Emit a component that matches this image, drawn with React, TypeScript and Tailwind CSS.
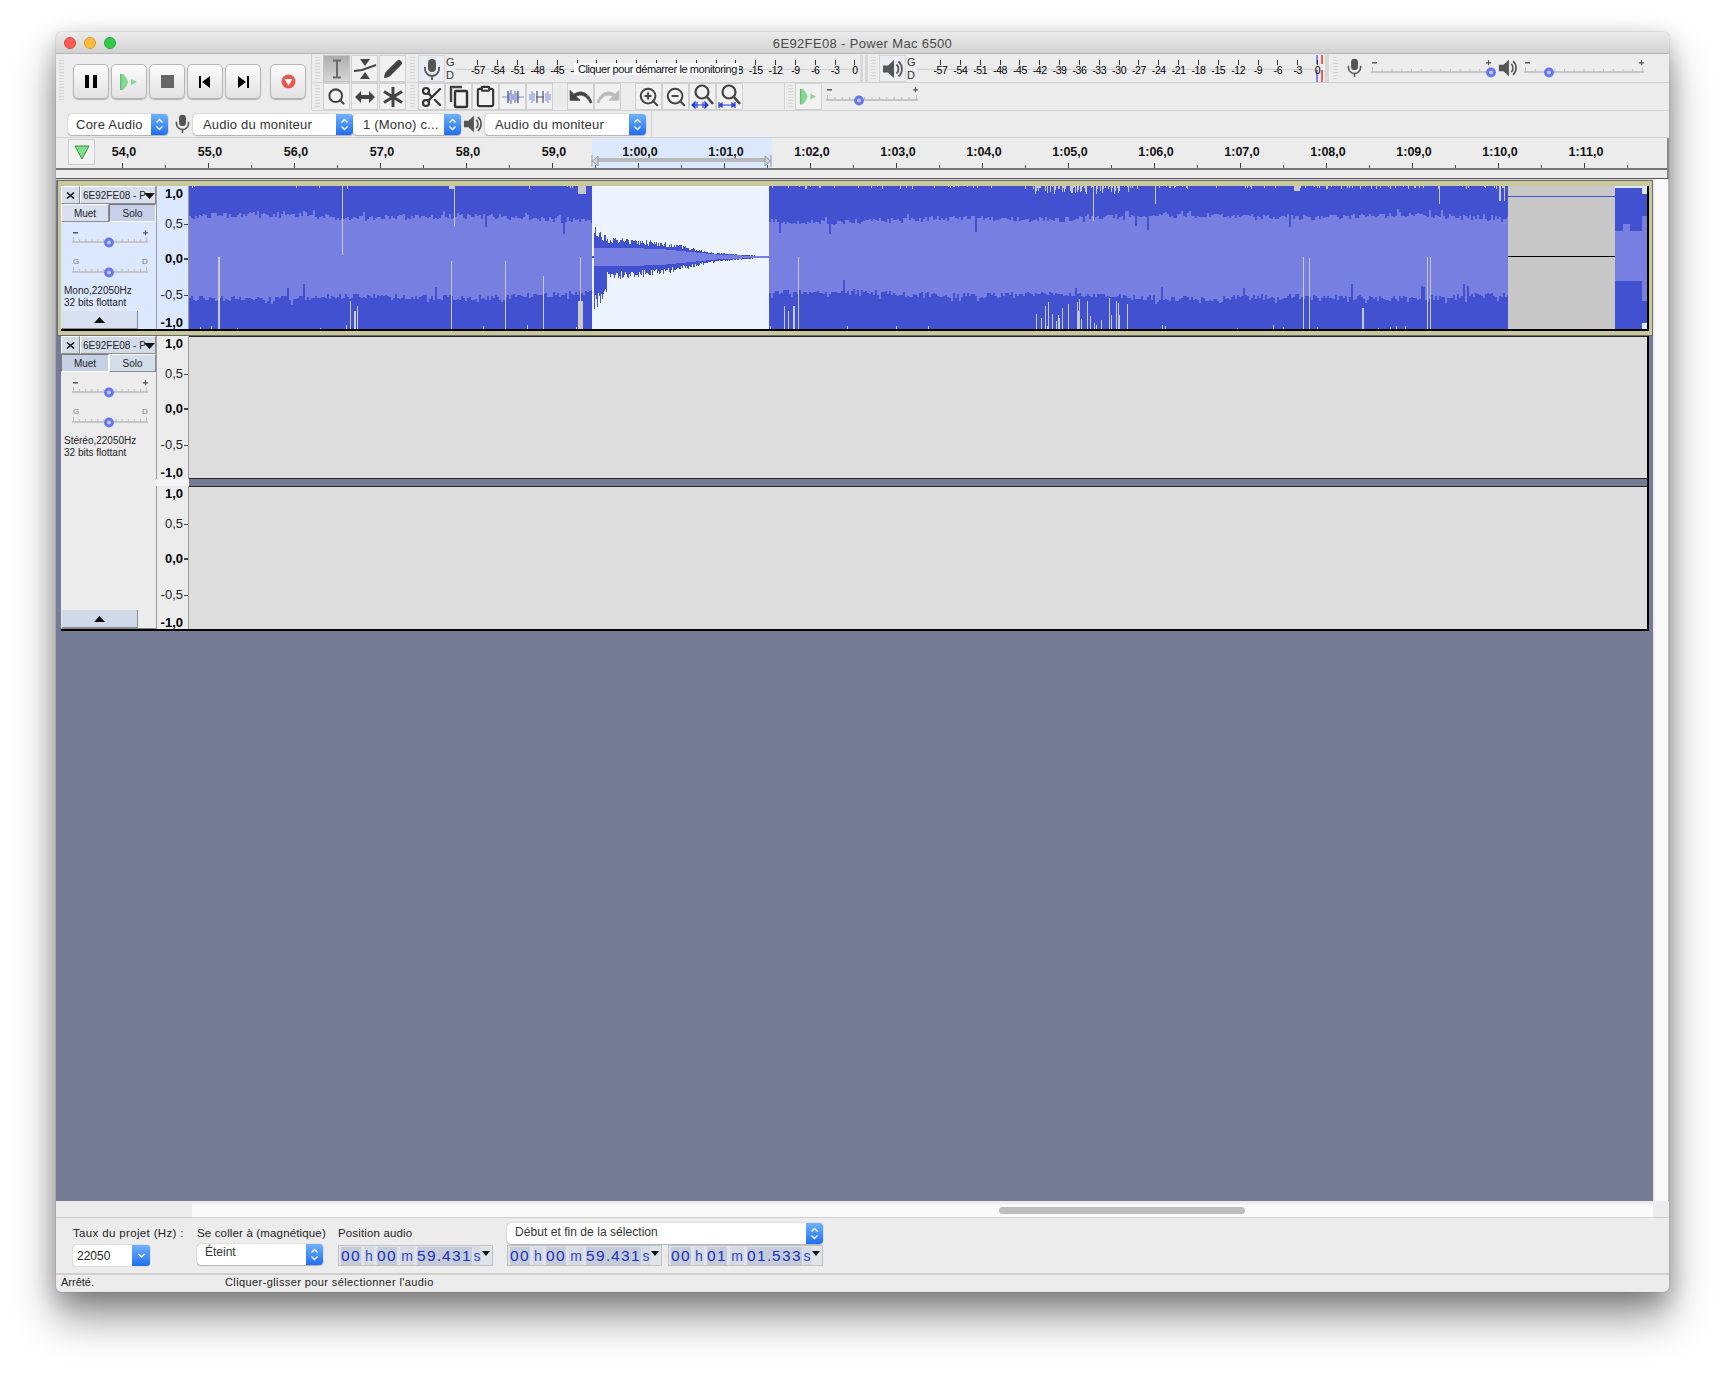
import React from "react";
import { Scissors, Clipboard, Search, ZoomIn, ZoomOut, Pencil } from "lucide-react";

/* ---------- waveform data ---------- */
function mulberry(a: number) {
  return () => {
    a |= 0; a = (a + 0x6d2b79f5) | 0;
    let t = Math.imul(a ^ (a >>> 15), 1 | a);
    t = (t + Math.imul(t ^ (t >>> 7), 61 | t)) ^ t;
    return ((t ^ (t >>> 14)) >>> 0) / 4294967296;
  };
}
const WW = 1458, WH = 143, C = 71;
const SEL0 = 403, SEL1 = 580, GAP0 = 1319, GAP1 = 1426;
function buildWave() {
  const r = mulberry(42);
  let dark = "", light = "", grey = "";
  let heldA = 0.55, heldB = 0.55;
  for (let x = 0; x < WW; x++) {
    const px = x + 0.5;
    if (x >= GAP0 && x < GAP1) continue;
    if (x >= SEL0 && x < SEL1) {
      const t = (x - SEL0) / (SEL1 - SEL0);
      let env = t < 0.1 ? 0.45 - t * 2 : t < 0.4 ? 0.27 - (t - 0.1) * 0.2 : t < 0.7 ? 0.21 - (t - 0.4) * 0.5 : 0.06 - (t - 0.7) * 0.18;
      if (t < 0.01) env = 0;
      const a = env * (0.7 + r() * 0.35);
      const b = env * (0.75 + r() * 0.45) * (t < 0.08 ? 1.5 : 1);
      const l = Math.min(0.12, env * 0.5) + 0.004;
      dark += `M${px} ${C - Math.max(a, 0.012) * 71}V${C + Math.max(b, 0.012) * 71}`;
      light += `M${px} ${C - l * 71}V${C + l * 71}`;
      continue;
    }
    if (x >= GAP1) {
      const edge = x > 1452;
      dark += `M${px} ${edge ? 8 : 2}V${WH - (edge ? 6 : 0)}`;
      const notch = x > 1433 && x < 1441;
      light += `M${px} ${edge ? 30 : notch ? 38 : 45}V${edge ? 115 : 95}`;
      continue;
    }
    dark += `M${px} 0V${WH}`;
    const base = 0.54 + 0.02 * Math.sin(x / 37) + 0.035 * Math.sin(x / 160 + 1);
    if (x % 2 === 0) {
      heldA = base + (r() - 0.5) * 0.08 + (r() < 0.08 ? 0.05 : 0) - (r() < 0.015 ? 0.17 : 0);
      heldB = base + (r() - 0.5) * 0.08 + (r() < 0.08 ? 0.05 : 0) - (r() < 0.015 ? 0.17 : 0);
    }
    light += `M${px} ${C - heldA * 71}V${C + heldB * 71}`;
    const cluster = x > 845 && x < 941;
    const topBusy = x > 500 && x < 1319;
    if (cluster ? r() < 0.55 : topBusy ? r() < 0.12 : r() < 0.03) {
      grey += `M${px} 0V${1 + r() * (cluster ? 7 : 2)}`;
    }
    if (cluster && r() < 0.3) {
      grey += `M${px} ${WH - 2 - r() * 30}V${WH}`;
    } else if (r() < 0.02) {
      grey += `M${px} ${WH - 1 - r() * 3}V${WH}`;
    }
  }
  const lines: [number, number, number, number][] = [
    [29, 71, 143, 2], [153, 0, 69, 1], [161, 115, 143, 1], [165, 125, 143, 2], [168, 120, 143, 1],
    [260, 0, 3, 5], [262, 75, 143, 1], [265, 0, 40, 1], [316, 75, 143, 1], [354, 90, 143, 1],
    [389, 115, 143, 5], [391, 71, 115, 1], [389, 0, 8, 8], [609, 71, 143, 1], [595, 120, 143, 1],
    [599, 125, 143, 1], [604, 120, 143, 2], [904, 0, 35, 1], [966, 0, 18, 1], [1114, 71, 143, 1],
    [1120, 72, 143, 1], [1173, 122, 143, 2], [1238, 71, 143, 1], [1241, 71, 143, 1], [1250, 0, 18, 1],
    [1310, 0, 15, 2], [1315, 0, 15, 1], [1105, 0, 5, 6],
  ];
  for (const [x, y0, y1, w] of lines) for (let i = 0; i < w; i++) grey += `M${x + i + 0.5} ${y0}V${y1}`;
  return { dark, light, grey };
}
const WAVE = buildWave();

function Waveform() {
  return (
    <svg width={WW} height={WH} className="block shrink-0" shapeRendering="crispEdges">
      <rect x={SEL0} y={0} width={SEL1 - SEL0} height={WH} fill="#edf4ff" />
      <rect x={GAP0} y={0} width={GAP1 - GAP0} height={WH} fill="#c8c8c8" />
      <rect x={GAP0} y={10} width={GAP1 - GAP0} height={1} fill="#4251cf" />
      <rect x={GAP0} y={70} width={GAP1 - GAP0} height={1} fill="#000" />
      <path d={WAVE.dark} stroke="#4251cf" strokeWidth={1} fill="none" />
      <path d={WAVE.light} stroke="#7780e0" strokeWidth={1} fill="none" />
      <path d={WAVE.grey} stroke="#c8c8c8" strokeWidth={1} fill="none" />
    </svg>
  );
}

/* ---------- small drawings ---------- */
function Grip({ h = 24 }: { h?: number }) {
  const n = Math.floor(h / 3);
  return (
    <div className="flex w-[5px] shrink-0 flex-col gap-[2px]">
      {Array.from({ length: n }).map((_, i) => (
        <div key={i} className="h-px w-[5px] bg-[#d4d4d4]" />
      ))}
    </div>
  );
}
function MicIcon({ size = 22, color = "#555" }: { size?: number; color?: string }) {
  return (
    <svg width={size} height={size} viewBox="0 0 22 22">
      <rect x="7" y="1" width="8" height="13" rx="4" fill={color} />
      <path d="M4 9v2a7 7 0 0 0 14 0V9" fill="none" stroke={color} strokeWidth="1.8" />
      <path d="M11 18v4" stroke={color} strokeWidth="1.8" />
    </svg>
  );
}
function SpeakerIcon({ size = 22 }: { size?: number }) {
  return (
    <svg width={size} height={size} viewBox="0 0 22 22">
      <path d="M1 7.5h5L12 2v18l-6-5.5H1z" fill="#555" />
      <path d="M14.5 6.5a6 6 0 0 1 0 9M16.5 3.5a10 10 0 0 1 0 15" fill="none" stroke="#555" strokeWidth="1.8" />
    </svg>
  );
}
function PlayGlyph({ s = 1 }: { s?: number }) {
  return (
    <svg width={20 * s} height={18 * s} viewBox="0 0 20 18">
      <path d="M1 1h3c2.5 2 4.5 5 5 8-.5 3-2.500 6-5 8H1z" fill="#8ad694" />
      <path d="M12 6l6 3-6 3z" fill="#8ad694" />
      <path d="M1 1h1.500v16H1z" fill="#62c070" />
    </svg>
  );
}
function Chevrons() {
  return (
    <svg width="9" height="15" viewBox="0 0 9 15">
      <path d="M1.5 5.500l3-3 3 3M1.500 9.500l3 3 3-3" fill="none" stroke="#fff" strokeWidth="1.4" />
    </svg>
  );
}
function Slider({ w, thumb, minusY = 8, trackY = 18, labels }: { w: number; thumb: number; minusY?: number; trackY?: number; labels?: [string, string] }) {
  const ticks: number[] = [];
  for (let i = 0; i <= 12; i++) ticks.push(1 + (i * (w - 3)) / 12);
  return (
    <svg width={w + 12} height={trackY + 7} className="block shrink-0 overflow-visible">
      <rect x="0" y={trackY - 1} width={w} height="2" fill="#c6c6c6" />
      {ticks.map((t, i) => (
        <rect key={i} x={t} y={trackY - (i === 0 || i === 12 ? 5 : 3)} width="1" height={i === 0 || i === 12 ? 5 : 3} fill="#bdbdbd" />
      ))}
      {labels ? (
        <>
          <text x="1" y={minusY + 3} fontSize="8" fill="#777" fontFamily="Liberation Sans, sans-serif">{labels[0]}</text>
          <text x={w - 6} y={minusY + 3} fontSize="8" fill="#777" fontFamily="Liberation Sans, sans-serif">{labels[1]}</text>
        </>
      ) : (
        <>
          <rect x="1" y={minusY - 1} width="5" height="1.5" fill="#555" />
          <path d={`M${w - 5} ${minusY - 0.2}h5M${w - 2.5} ${minusY - 2.8}v5`} stroke="#555" strokeWidth="1.2" />
        </>
      )}
      <circle cx={thumb} cy={trackY + 0.5} r="3.4" fill="#c5ccf5" stroke="#6577ee" strokeWidth="3" />
    </svg>
  );
}

/* ---------- buttons ---------- */
function TBtn({ children, className = "" }: { children: React.ReactNode; className?: string }) {
  return (
    <div className={`flex h-[35px] w-[36px] shrink-0 items-center justify-center rounded-[5px] border border-[#b4b4b4] bg-linear-to-b from-[#fcfcfc] to-[#e2e2e2] shadow-[0_1px_1px_rgba(0,0,0,0.25)] ${className}`}>
      {children}
    </div>
  );
}
function Tool({ children, active = false, pressed = false, className = "" }: { children: React.ReactNode; active?: boolean; pressed?: boolean; className?: string }) {
  const bg = active ? "bg-linear-to-b from-[#aeaeae] to-[#d6d6d6] border-[#c4c4c4]" : pressed ? "bg-[#e9edf3] border-[#d4d4d4]" : "bg-[#f1f1f1] border-[#d0d0d0]";
  return <div className={`flex h-[27px] w-[27px] shrink-0 items-center justify-center border ${bg} ${className}`}>{children}</div>;
}
function Select({ text, w, className = "", textClass = "" }: { text: string; w: string; className?: string; textClass?: string }) {
  return (
    <div className={`flex h-[21px] shrink-0 items-stretch overflow-hidden rounded-[4px] bg-white shadow-[0_0_1px_rgba(0,0,0,0.5),0_1px_1px_rgba(0,0,0,0.2)] ${w} ${className}`}>
      <div className={`min-w-0 flex-1 overflow-hidden whitespace-nowrap text-[#333] ${textClass}`}>{text}</div>
      <div className="flex w-[17px] shrink-0 items-center justify-center bg-linear-to-b from-[#6fb1fb] to-[#1e6ef0]">
        <Chevrons />
      </div>
    </div>
  );
}

/* ---------- meters ---------- */
const METER = ["-57", "-54", "-51", "-48", "-45", "-42", "-39", "-36", "-33", "-30", "-27", "-24", "-21", "-18", "-15", "-12", "-9", "-6", "-3", "0"];
const HIDDEN = ["-39", "-36", "-33", "-30", "-27", "-24", "-21"];
function Meter({ w, off, covered = false, children }: { w: string; off: string; covered?: boolean; children?: React.ReactNode }) {
  return (
    <div className={`relative h-[28px] shrink-0 ${w}`}>
      <div className="absolute left-0 right-0 top-[14px] h-[1px] bg-[#cfcfcf]" />
      <div className={`relative flex ${off}`}>
        {METER.map((m, i) => (
          <div key={i} className="flex w-[19.85px] shrink-0 flex-col items-center">
            <div className="mt-[5px] h-[5px] w-px bg-[#333]" />
            <div className="text-[10.5px] leading-[10px] tracking-[-0.4px] text-black">{covered && HIDDEN.includes(m) ? "" : m}</div>
          </div>
        ))}
      </div>
      {children}
    </div>
  );
}
function GD() {
  return (
    <div className="flex h-[28px] w-[11px] shrink-0 flex-col justify-between py-[1px] pl-[1px] text-[11px] leading-[13px] text-[#333]">
      <div>G</div>
      <div>D</div>
    </div>
  );
}

/* ---------- tracks ---------- */
function VRuler({ bg }: { bg: string }) {
  const rows: [string, boolean, boolean, string][] = [
    ["1,0", true, false, ""],
    ["0,5", false, true, "mt-[16px]"],
    ["0,0", true, true, "mt-[21px]"],
    ["-0,5", false, true, "mt-[22px]"],
    ["-1,0", true, false, "mt-[14px]"],
  ];
  return (
    <div className={`h-[143px] w-[33px] shrink-0 border-x border-[#9a9a9a] pt-px ${bg}`}>
      {rows.map(([t, bold, tick, m]) => (
        <div key={t} className={`flex h-[14px] items-center justify-end ${m}`}>
          <span className={`text-[13px] leading-[14px] text-[#222] ${bold ? "font-bold text-black" : ""}`}>{t}</span>
          <span className={`ml-[1px] w-[4px] ${bold ? "h-[2px]" : "h-px"} ${tick ? "bg-[#444]" : "bg-transparent"}`} />
        </div>
      ))}
    </div>
  );
}
function PanelHead({ pressed, btn, dark }: { pressed: "Muet" | "Solo"; btn: string; dark: string }) {
  const bevel = "border-t border-l border-t-white border-l-white border-r border-b border-r-[#8c8c8c] border-b-[#8c8c8c]";
  const sunk = "border-t border-l border-t-[#7c7c7c] border-l-[#7c7c7c] border-r border-b border-r-white border-b-white";
  return (
    <>
      <div className="flex h-[18px]">
        <div className={`flex w-[19px] items-center justify-center ${bevel} ${btn}`}>
          <svg width="9" height="9" viewBox="0 0 9 9"><path d="M1 1.500l7 6M8 1.500l-7 6" stroke="#111" strokeWidth="1.6" /></svg>
        </div>
        <div className={`flex min-w-0 flex-1 items-center overflow-hidden pl-[2px] pt-px text-[10px] leading-[15px] text-[#222] ${bevel} ${btn}`}>
          <span className="w-[61px] shrink-0 whitespace-nowrap">6E92FE08 - P</span>
          <svg width="11" height="6" viewBox="0 0 11 6" className="shrink-0"><path d="M0 0h11L5.5 6z" fill="#111" /></svg>
        </div>
      </div>
      <div className="flex h-[18px] text-[10px] leading-[17px] text-[#222]">
        <div className={`w-[48px] text-center ${pressed === "Muet" ? `${sunk} ${dark}` : `${bevel} ${btn}`}`}>Muet</div>
        <div className={`w-[47px] text-center ${pressed === "Solo" ? `${sunk} ${dark}` : `${bevel} ${btn}`}`}>Solo</div>
      </div>
    </>
  );
}
function PanelBody({ info }: { info: string }) {
  return (
    <>
      <div className="ml-[11px] mt-[6px]">
        <Slider w={76} thumb={37} minusY={5} trackY={14} />
      </div>
      <div className="ml-[11px] mt-[7px]">
        <Slider w={76} thumb={37} minusY={5} trackY={16} labels={["G", "D"]} />
      </div>
      <div className="ml-[3px] mt-[6px] text-[10px] leading-[12px] text-[#222]">
        {info}
        <br />
        32 bits flottant
      </div>
    </>
  );
}
function Collapse({ bg }: { bg: string }) {
  return (
    <div className={`ml-px flex h-[18px] w-[76px] items-center justify-center border-r border-b border-[#8c8c8c] ${bg}`}>
      <svg width="11" height="6" viewBox="0 0 11 6"><path d="M5.500 0L11 6H0z" fill="#111" /></svg>
    </div>
  );
}

/* ---------- timers ---------- */
function Timer({ v, w, className = "" }: { v: [string, string, string, string]; w: string; className?: string }) {
  const d = "bg-[#c5ccd9] text-[15.5px] leading-[18px] tracking-[1.4px] text-[#1c2fbf]";
  const u = "bg-[#d5dbe4] text-[14px] leading-[18px] text-[#3346c4] text-center";
  return (
    <div className={`flex h-[21px] shrink-0 items-center border border-[#c2c2c2] bg-[#dfe4ea] pl-[2px] ${w} ${className}`}>
      <span className={`w-[20px] ${d}`}>{v[0]}</span>
      <span className={`mx-[3px] w-[10px] ${u}`}>h</span>
      <span className={`w-[20px] ${d}`}>{v[1]}</span>
      <span className={`mx-[3px] w-[14px] ${u}`}>m</span>
      <span className={`w-[20px] ${d}`}>{v[2]}</span>
      <span className={`w-[5px] ${d}`}>.</span>
      <span className={`w-[30px] ${d}`}>{v[3]}</span>
      <span className={`mx-px w-[8px] ${u}`}>s</span>
      <svg width="9" height="5" viewBox="0 0 9 5" className="-mt-[5px] shrink-0"><path d="M0 0h8L4 5z" fill="#111" /></svg>
    </div>
  );
}

const RULER = ["54,0", "55,0", "56,0", "57,0", "58,0", "59,0", "1:00,0", "1:01,0", "1:02,0", "1:03,0", "1:04,0", "1:05,0", "1:06,0", "1:07,0", "1:08,0", "1:09,0", "1:10,0", "1:11,0"];
const DEV = "pl-[10px] text-[13px] leading-[22px] tracking-[0.2px]";

export default function App() {
  return (
    <div className="min-h-[1373px] w-[1725px] overflow-hidden bg-white pl-[56px] pt-[32px] font-[family-name:Liberation_Sans,Arial,sans-serif]">
      <div className="flex h-[1260px] w-[1613px] flex-col overflow-hidden rounded-[5px] bg-[#ececec] shadow-[0_26px_42px_rgba(0,0,0,0.42),0_6px_22px_rgba(0,0,0,0.22),0_0_1px_rgba(0,0,0,0.55)]">
        {/* title bar */}
        <div className="flex h-[22px] shrink-0 items-center border-b border-[#b8b8b8] bg-linear-to-b from-[#ebebeb] to-[#d2d2d2] pl-[8px]">
          <div className="flex w-[52px] gap-[8px]">
            <span className="h-[12px] w-[12px] rounded-full border border-[#d9493e] bg-[#fc5b57]" />
            <span className="h-[12px] w-[12px] rounded-full border border-[#d99c2b] bg-[#fdbc40]" />
            <span className="h-[12px] w-[12px] rounded-full border border-[#25a53a] bg-[#34c84a]" />
          </div>
          <div className="-ml-[60px] flex-1 pt-[2px] text-center text-[13px] leading-[20px] tracking-[0.35px] text-[#4a4a4a]">6E92FE08 - Power Mac 6500</div>
        </div>

        {/* main toolbars */}
        <div className="flex h-[57px] shrink-0">
          {/* transport */}
          <div className="flex h-[56px] w-[256px] shrink-0 items-start border-r border-[#d2d2d2] pl-[3px] pt-[10px]">
            <div className="mt-[-4px]"><Grip h={42} /></div>
            <div className="ml-[9px] flex gap-[2px]">
              <TBtn>
                <svg width="14" height="15" viewBox="0 0 14 15"><path d="M1 1h4v13H1zM9 1h4v13H9z" fill="#000" /></svg>
              </TBtn>
              <TBtn><PlayGlyph /></TBtn>
              <TBtn>
                <svg width="13" height="13" viewBox="0 0 13 13"><rect width="13" height="13" fill="#666" /></svg>
              </TBtn>
              <TBtn>
                <svg width="14" height="14" viewBox="0 0 14 14"><path d="M1 1h2v12H1zM12 1v12L4 7z" fill="#000" /></svg>
              </TBtn>
              <TBtn>
                <svg width="14" height="14" viewBox="0 0 14 14"><path d="M11 1h2v12h-2zM2 1v12l8-6z" fill="#000" /></svg>
              </TBtn>
            </div>
            <TBtn className="ml-[9px]">
              <svg width="15" height="15" viewBox="0 0 15 15"><circle cx="7.500" cy="7.500" r="7" fill="#e8584e" /><path d="M3.500 5h8L7.500 11.500z" fill="#fff" /></svg>
            </TBtn>
          </div>

          <div className="flex min-w-0 flex-1 flex-col">
            {/* row 1 */}
            <div className="flex h-[29px] shrink-0 items-start border-b border-[#d2d2d2] pt-px">
              <div className="ml-[3px] mt-[2px]"><Grip h={24} /></div>
              <div className="ml-[3px] flex gap-px">
                <Tool active>
                  <svg width="14" height="20" viewBox="0 0 14 20"><path d="M3 1.500h8M3 18.500h8M7 1.500v17" stroke="#6a6a6a" strokeWidth="2" fill="none" /></svg>
                </Tool>
                <Tool>
                  <svg width="24" height="22" viewBox="0 0 24 22"><path d="M7 1h10l-5 7zM7 21h10l-5-7z" fill="#444" /><path d="M1 13l8-1 14-5" stroke="#444" strokeWidth="2" fill="none" /></svg>
                </Tool>
                <Tool><Pencil size={20} color="#444" fill="#444" strokeWidth={1.5} /></Tool>
              </div>
              <div className="ml-[4px] mt-[2px]"><Grip h={24} /></div>
              <Tool pressed className="ml-[3px]"><MicIcon /></Tool>
              <GD />
              <Meter w="w-[403px]" off="ml-[12px]" covered>
                <div className="absolute left-[118px] top-[8px] h-[12px] w-[165px] whitespace-nowrap bg-[#fafbff] pl-[4px] text-[11px] leading-[12px] tracking-[-0.42px] text-[#111]">Cliquer pour démarrer le monitoring</div>
              </Meter>
              <div className="ml-[1px] h-[27px] w-[3px] bg-[#d8d8d8]" />
              <div className="ml-[2px] h-[27px] w-[3px] bg-[#d8d8d8]" />
              <div className="ml-[3px] mt-[2px]"><Grip h={24} /></div>
              <Tool pressed className="ml-[3px]"><SpeakerIcon /></Tool>
              <GD />
              <Meter w="w-[399px]" off="ml-[13.6px]" />
              <div className="flex h-[27px] w-[7px] shrink-0 justify-between">
                <div className="flex flex-col justify-between"><div className="h-[9px] w-[2px] bg-[#7b86f0]" /><div className="h-[12px] w-[2px] bg-[#7b86f0]" /></div>
                <div className="flex flex-col justify-between"><div className="h-[9px] w-[2px] bg-[#f0605a]" /><div className="h-[12px] w-[2px] bg-[#f0605a]" /></div>
              </div>
              <div className="ml-[2px] h-[27px] w-[4px] bg-[#d8d8d8]" />
              <div className="ml-[4px] mt-[2px]"><Grip h={24} /></div>
              <div className="ml-[7px] mt-[3px]"><MicIcon size={19} /></div>
              <div className="ml-[7px]"><Slider w={120} thumb={120} trackY={17} /></div>
              <div className="-ml-[5px] mt-[3px]"><SpeakerIcon size={20} /></div>
              <div className="ml-[6px]"><Slider w={120} thumb={25} trackY={17} /></div>
            </div>
            {/* row 2 */}
            <div className="flex h-[28px] shrink-0 items-start border-b border-[#d2d2d2]">
              <div className="ml-[3px] mt-[2px]"><Grip h={24} /></div>
              <div className="ml-[3px] flex gap-px">
                <Tool><Search size={19} color="#444" strokeWidth={2.6} /></Tool>
                <Tool>
                  <svg width="22" height="14" viewBox="0 0 22 14"><path d="M1 7l6-6v4h8V1l6 6-6 6V9H7v4z" fill="#444" /></svg>
                </Tool>
                <Tool>
                  <svg width="22" height="22" viewBox="0 0 22 22"><path d="M11 1v20M2 5.500l18 11M20 5.500l-18 11" stroke="#444" strokeWidth="3" /></svg>
                </Tool>
              </div>
              <div className="ml-[4px] mt-[2px]"><Grip h={24} /></div>
              <div className="ml-[3px] flex gap-0">
                <Tool><Scissors size={24} color="#333" strokeWidth={2.2} /></Tool>
                <Tool>
                  <svg width="22" height="24" viewBox="0 0 22 24"><path d="M3 17V2h11" fill="none" stroke="#444" strokeWidth="2.4" /><rect x="7" y="6" width="12" height="16" rx="1" fill="none" stroke="#333" strokeWidth="2.4" /></svg>
                </Tool>
                <Tool><Clipboard size={23} color="#333" strokeWidth={2.2} /></Tool>
                <Tool>
                  <svg width="24" height="16" viewBox="0 0 24 16"><path d="M1 8h6M17 8h6" stroke="#7f8fd8" strokeWidth="1.2" /><path d="M8 4v8M10 1v14M12 5v6M14 2v12M16 4v8" stroke="#6f80d8" strokeWidth="1.2" /><path d="M7 2v12M17 2v12" stroke="#556" strokeWidth="1.2" /></svg>
                </Tool>
                <Tool>
                  <svg width="24" height="16" viewBox="0 0 24 16"><path d="M2 5v6M4 2v12M6 4v8M18 4v8M20 2v12M22 5v6" stroke="#8a9ae4" strokeWidth="1.2" /><path d="M8 8h8" stroke="#556" strokeWidth="1.2" /><path d="M9 2v12M15 2v12" stroke="#556" strokeWidth="1.2" /></svg>
                </Tool>
              </div>
              <div className="ml-[14px] flex gap-0">
                <Tool>
                  <svg width="24" height="18" viewBox="0 0 22 16"><path d="M1 2v9h9L6.500 7.500C10 5 16 6 19.500 13.500L21 13C18 4 11 1 4.500 5.500z" fill="#444" stroke="#444" strokeWidth="0.8" /></svg>
                </Tool>
                <Tool>
                  <svg width="24" height="18" viewBox="0 0 22 16"><path d="M21 2v9h-9l3.500-3.500C12 5 6 6 2.500 13.500L1 13C4 4 11 1 17.500 5.500z" fill="#bbb" stroke="#bbb" strokeWidth="0.8" /></svg>
                </Tool>
              </div>
              <div className="ml-[14px] flex gap-0">
                <Tool><ZoomIn size={22} color="#444" strokeWidth={2.2} /></Tool>
                <Tool><ZoomOut size={22} color="#444" strokeWidth={2.2} /></Tool>
                <Tool>
                  <svg width="24" height="25" viewBox="0 0 24 25"><circle cx="11" cy="8" r="6.500" fill="none" stroke="#444" strokeWidth="2.2" /><path d="M16 13l6 7" stroke="#444" strokeWidth="2.6" /><path d="M1 21h16M1 21l3-3v6zM17 21l-3-3v6zM6 18v6M12 18v6" stroke="#2a3fd8" strokeWidth="1.2" fill="#2a3fd8" /></svg>
                </Tool>
                <Tool>
                  <svg width="24" height="25" viewBox="0 0 24 25"><circle cx="11" cy="8" r="6.500" fill="none" stroke="#444" strokeWidth="2.2" /><path d="M16 13l6 7" stroke="#444" strokeWidth="2.6" /><path d="M1 21h16M1 18v6M17 18v6M1 21l3-2v4zM17 21l-3-2v4z" stroke="#2a3fd8" strokeWidth="1.2" fill="#2a3fd8" /></svg>
                </Tool>
              </div>
              <div className="ml-[41px] h-[27px] w-px bg-[#d4d4d4]" />
              <div className="ml-[3px] mt-[2px]"><Grip h={24} /></div>
              <Tool className="ml-[2px]"><PlayGlyph s={0.95} /></Tool>
              <div className="ml-[4px]"><Slider w={92} thumb={33} minusY={7} trackY={17} /></div>
            </div>
          </div>
        </div>

        {/* device row */}
        <div className="flex h-[27px] shrink-0 items-start border-b border-[#d2d2d2] pt-[3px]">
          <Select text="Core Audio" w="w-[100px]" className="ml-[12px]" textClass="pl-[8px] text-[13px] leading-[22px] tracking-[0.25px]" />
          <div className="ml-[5px]"><MicIcon size={19} /></div>
          <Select text="Audio du moniteur" w="w-[160px]" className="ml-[1px]" textClass={DEV} />
          <Select text="1 (Mono) c..." w="w-[108px]" textClass={DEV} />
          <div className="ml-[2px]"><SpeakerIcon size={20} /></div>
          <Select text="Audio du moniteur" w="w-[161px]" className="ml-[2px]" textClass={DEV} />
          <div className="-mt-[3px] ml-[5px] h-[27px] w-px bg-[#d2d2d2]" />
        </div>

        {/* ruler */}
        <div className="relative h-[41px] shrink-0 border-b border-r-2 border-b-[#555] border-r-[#8a8a8a]">
          <div className="absolute left-[536px] top-0 h-[30px] w-[180px] bg-[#dbe8fd]" />
          <svg width="182" height="14" className="absolute left-[535px] top-[16px]">
            <rect x="4" y="4" width="174" height="4" fill="#b9b9b9" />
            <path d="M1 1v12M1.500 7L7 2v10z" stroke="#999" fill="#cfcfcf" />
            <path d="M180 1v12M179.500 7L174 2v10z" stroke="#999" fill="#cfcfcf" />
          </svg>
          <div className="relative flex h-[30px] items-start">
            <div className="ml-[12px] mt-px flex h-[26px] w-[27px] shrink-0 items-center justify-center border border-[#cfcfcf] bg-[#f2f2f2]">
              <svg width="16" height="15" viewBox="0 0 16 15"><path d="M1 1h14L8 14z" fill="#7fe08a" stroke="#3f8a4a" strokeWidth="1" /></svg>
            </div>
            {RULER.map((r) => (
              <div key={r} className="w-[86px] shrink-0">
                <div className="ml-[1px] mt-[7px] h-[14px] w-[56px] whitespace-nowrap text-center text-[12.5px] font-bold leading-[14px] text-[#111]">{r}</div>
                <div className="flex h-[9px] items-end">
                  <div className="ml-[27px] h-[5px] w-px bg-[#444]" />
                  <div className="ml-[42px] h-[3px] w-px bg-[#555]" />
                </div>
              </div>
            ))}
          </div>
          <div className="h-[2px] bg-[#777]" />
        </div>

        {/* tracks area */}
        <div className="flex min-h-0 flex-1">
          <div className="flex h-[1022px] w-[1597px] shrink-0 flex-col border-t border-[#d8d8d8] bg-[#767c96] pl-[2px] pt-px">
            {/* track 1 */}
            <div className="w-[1594px] shrink-0 border-x-[3px] border-b-[4px] border-t-[5px] border-x-[#c9c89c] border-b-[#c9c89c] border-t-[#c9c89c] outline outline-1 outline-[#6b6b6b]">
              <div className="flex h-[145px] border-r-2 border-b-2 border-black bg-[#dce8ff]">
                <div className="flex h-[143px] w-[95px] shrink-0 flex-col">
                  <PanelHead pressed="Solo" btn="bg-[#d8e0f0]" dark="bg-[#c6d0e8]" />
                  <PanelBody info="Mono,22050Hz" />
                  <div className="mt-auto"><Collapse bg="bg-[#d8e0f0]" /></div>
                </div>
                <VRuler bg="bg-[#dce8ff]" />
                <Waveform />
              </div>
            </div>
            {/* track 2 */}
            <div className="ml-[3px] mt-px flex h-[295px] w-[1588px] shrink-0 border-b-2 border-r-2 border-black">
              <div className="flex h-[293px] w-[95px] shrink-0 flex-col border-b border-[#888] bg-[#ececec]">
                <PanelHead pressed="Muet" btn="bg-[#d3dce9]" dark="bg-[#c6d0e4]" />
                <PanelBody info="Stéréo,22050Hz" />
                <div className="mt-auto"><Collapse bg="bg-[#cfd9e8]" /></div>
              </div>
              <div className="flex flex-1 flex-col">
                <div className="flex">
                  <VRuler bg="bg-[#ececec]" />
                  <div className="h-[143px] flex-1 border-b border-t border-[#222] bg-[#dedede]" />
                </div>
                <div className="flex h-[7px]">
                  <div className="w-[33px] bg-[#f4f4f4]" />
                  <div className="flex-1 bg-[#767c96]" />
                </div>
                <div className="flex">
                  <VRuler bg="bg-[#ececec]" />
                  <div className="h-[143px] flex-1 border-t border-[#222] bg-[#dedede]" />
                </div>
              </div>
            </div>
          </div>
          <div className="h-[1022px] w-[2px] shrink-0 bg-[#ececec]" />
          <div className="h-[1022px] w-[13px] shrink-0 bg-[#fafafa]" />
          <div className="h-[1022px] flex-1 bg-[#b8b8b8]" />
        </div>

        {/* horizontal scrollbar */}
        <div className="flex h-[16px] shrink-0 border-b border-[#cfcfcf] pt-[2px]">
          <div className="w-[136px] shrink-0 bg-[#ececec]" />
          <div className="h-[13px] w-[1461px] shrink-0 bg-[#fafafa] pl-[807px] pt-[3px]">
            <div className="h-[7px] w-[246px] rounded-full bg-[#bdbdbd]" />
          </div>
        </div>

        {/* selection toolbar */}
        <div className="flex h-[57px] shrink-0 border-b-2 border-[#cfcfcf] pl-[17px]">
          <div className="w-[124px] shrink-0">
            <div className="mt-[8px] h-[14px] text-[11.5px] leading-[14px] tracking-[0.35px] text-[#222]">Taux du projet (Hz) :</div>
            <div className="mt-[5px] flex h-[21px] w-[77px] items-stretch overflow-hidden rounded-[3px] bg-white shadow-[0_0_1px_rgba(0,0,0,0.5)]">
              <div className="flex-1 pl-[4px] text-[12px] leading-[23px] text-[#222]">22050</div>
              <div className="flex w-[18px] items-center justify-center bg-linear-to-b from-[#6fb1fb] to-[#1e6ef0]">
                <svg width="9" height="7" viewBox="0 0 9 7"><path d="M1.500 2l3 3 3-3" fill="none" stroke="#fff" strokeWidth="1.4" /></svg>
              </div>
            </div>
          </div>
          <div className="w-[141px] shrink-0">
            <div className="mt-[8px] h-[14px] text-[11.5px] leading-[14px] tracking-[0.15px] text-[#222]">Se coller à (magnétique)</div>
            <Select text="Éteint" w="w-[126px]" className="mt-[4px]" textClass="pl-[8px] text-[12px] leading-[17px]" />
          </div>
          <div className="w-[169px] shrink-0">
            <div className="mt-[8px] h-[14px] text-[11.5px] leading-[14px] tracking-[0.15px] text-[#222]">Position audio</div>
            <Timer v={["00", "00", "59", "431"]} w="w-[155px]" className="mt-[5px]" />
          </div>
          <div className="w-[320px] shrink-0">
            <Select text="Début et fin de la sélection" w="w-[316px]" className="mt-[5px]" textClass="pl-[8px] text-[12px] leading-[18px] tracking-[0.05px]" />
            <div className="mt-[1px] flex gap-[6px]">
              <Timer v={["00", "00", "59", "431"]} w="w-[155px]" />
              <Timer v={["00", "01", "01", "533"]} w="w-[155px]" />
            </div>
          </div>
        </div>

        {/* status bar */}
        <div className="flex h-[17px] shrink-0 items-start text-[11px] leading-[14px] text-[#222]">
          <div className="w-[169px] shrink-0 pl-[5px]">Arrêté.</div>
          <div className="tracking-[0.4px]">Cliquer-glisser pour sélectionner l&apos;audio</div>
        </div>
      </div>
    </div>
  );
}
